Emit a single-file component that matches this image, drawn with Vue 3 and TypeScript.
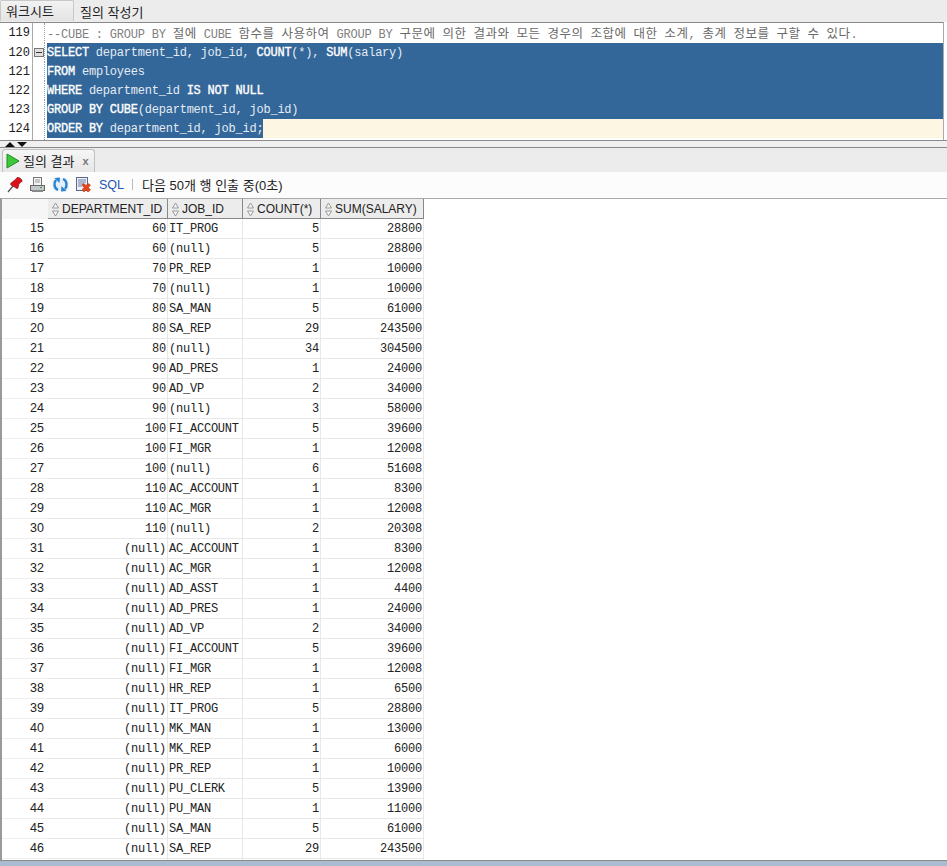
<script setup lang="ts">
interface Seg { t: string; k?: boolean; ko?: boolean }
const comment: Seg[] = [
  { t: '--CUBE : GROUP BY ' }, { t: '절에', ko: true }, { t: ' CUBE ' },
  { t: '함수를', ko: true }, { t: ' ' }, { t: '사용하여', ko: true }, { t: ' GROUP BY ' },
  { t: '구문에', ko: true }, { t: ' ' }, { t: '의한', ko: true }, { t: ' ' },
  { t: '결과와', ko: true }, { t: ' ' }, { t: '모든', ko: true }, { t: ' ' },
  { t: '경우의', ko: true }, { t: ' ' }, { t: '조합에', ko: true }, { t: ' ' },
  { t: '대한', ko: true }, { t: ' ' }, { t: '소계', ko: true }, { t: ', ' },
  { t: '총계', ko: true }, { t: ' ' }, { t: '정보를', ko: true }, { t: ' ' },
  { t: '구할', ko: true }, { t: ' ' }, { t: '수', ko: true }, { t: ' ' },
  { t: '있다', ko: true }, { t: '.' }
]
const sql: { n: number; segs: Seg[]; last?: boolean }[] = [
  { n: 120, segs: [{ t: 'SELECT', k: true }, { t: ' department_id, job_id, ' }, { t: 'COUNT', k: true }, { t: '(*), ' }, { t: 'SUM', k: true }, { t: '(salary)' }] },
  { n: 121, segs: [{ t: 'FROM', k: true }, { t: ' employees' }] },
  { n: 122, segs: [{ t: 'WHERE', k: true }, { t: ' department_id ' }, { t: 'IS NOT NULL', k: true }] },
  { n: 123, segs: [{ t: 'GROUP BY CUBE', k: true }, { t: '(department_id, job_id)' }] },
  { n: 124, segs: [{ t: 'ORDER BY', k: true }, { t: ' department_id, job_id;' }], last: true }
]
const rows: [number, string, string, number, number][] = [
  [15, '60', 'IT_PROG', 5, 28800], [16, '60', '(null)', 5, 28800], [17, '70', 'PR_REP', 1, 10000],
  [18, '70', '(null)', 1, 10000], [19, '80', 'SA_MAN', 5, 61000], [20, '80', 'SA_REP', 29, 243500],
  [21, '80', '(null)', 34, 304500], [22, '90', 'AD_PRES', 1, 24000], [23, '90', 'AD_VP', 2, 34000],
  [24, '90', '(null)', 3, 58000], [25, '100', 'FI_ACCOUNT', 5, 39600], [26, '100', 'FI_MGR', 1, 12008],
  [27, '100', '(null)', 6, 51608], [28, '110', 'AC_ACCOUNT', 1, 8300], [29, '110', 'AC_MGR', 1, 12008],
  [30, '110', '(null)', 2, 20308], [31, '(null)', 'AC_ACCOUNT', 1, 8300], [32, '(null)', 'AC_MGR', 1, 12008],
  [33, '(null)', 'AD_ASST', 1, 4400], [34, '(null)', 'AD_PRES', 1, 24000], [35, '(null)', 'AD_VP', 2, 34000],
  [36, '(null)', 'FI_ACCOUNT', 5, 39600], [37, '(null)', 'FI_MGR', 1, 12008], [38, '(null)', 'HR_REP', 1, 6500],
  [39, '(null)', 'IT_PROG', 5, 28800], [40, '(null)', 'MK_MAN', 1, 13000], [41, '(null)', 'MK_REP', 1, 6000],
  [42, '(null)', 'PR_REP', 1, 10000], [43, '(null)', 'PU_CLERK', 5, 13900], [44, '(null)', 'PU_MAN', 1, 11000],
  [45, '(null)', 'SA_MAN', 5, 61000], [46, '(null)', 'SA_REP', 29, 243500]
]
const cols = ['DEPARTMENT_ID', 'JOB_ID', 'COUNT(*)', 'SUM(SALARY)']
</script>

<template>
  <div class="page">
    <div class="tabs">
      <div class="tab active">워크시트</div>
      <div class="tab">질의 작성기</div>
    </div>
    <div class="editor">
      <div class="line first">
        <div class="num">119</div>
        <div class="fold"></div>
        <div class="code comment">
          <span v-for="(s, i) in comment" :key="i" :class="{ ko: s.ko }">{{ s.t }}</span>
        </div>
      </div>
      <div v-for="l in sql" :key="l.n" class="line">
        <div class="num">{{ l.n }}</div>
        <div class="fold"><span v-if="l.n === 120" class="minus"></span></div>
        <div class="code" :class="{ full: !l.last, cur: l.last }">
          <span class="sel"><span v-for="(s, i) in l.segs" :key="i" :class="{ kw: s.k }">{{ s.t }}</span></span>
        </div>
      </div>
    </div>
    <div class="splitter">
      <span class="up"></span><span class="down"></span>
    </div>
    <div class="rtabs">
      <div class="rtab">
        <svg width="14" height="16" viewBox="0 0 14 16"><path d="M1 1 L13 8 L1 15 Z" fill="#3fc83a" stroke="#1d8a22" stroke-width="1"/></svg>
        <span class="rlabel">질의 결과</span>
        <span class="x">x</span>
      </div>
    </div>
    <div class="toolbar">
      <svg class="ic" width="16" height="17" viewBox="0 0 16 17">
        <path d="M1 16 L6 10" stroke="#555" stroke-width="1.3"/>
        <path d="M4 7 L9 3 L10 1.500 Q12 0.500 15 4 Q15.500 6 14 6 L12 8 L11 12 Q10 13 9 12 L4 9 Q3 8 4 7Z" fill="#d8141a" stroke="#8e0c10" stroke-width="0.6"/>
      </svg>
      <svg class="ic" width="17" height="17" viewBox="0 0 17 17">
        <rect x="4.500" y="1.500" width="8" height="8" fill="#f4f4f4" stroke="#777"/>
        <path d="M6 4h5M6 6h5" stroke="#999"/>
        <rect x="1.500" y="9.500" width="14" height="5" fill="#c4c8cc" stroke="#666"/>
        <rect x="3" y="14" width="11" height="2" fill="#888"/>
        <rect x="11" y="11" width="2" height="1" fill="#3a3"/>
      </svg>
      <svg class="ic" width="17" height="17" viewBox="0 0 17 17">
        <rect x="0.500" y="2.500" width="16" height="12" rx="3" fill="#e4f1fc"/>
        <path d="M6 14 C2 12.500 1.500 7 4 4" fill="none" stroke="#2a82cc" stroke-width="2.400"/>
        <path d="M2.500 2 L8 1.500 L7.500 7 Z" fill="#2a82cc"/>
        <path d="M11 3 C15 4.500 15.500 10 13 13" fill="none" stroke="#2a82cc" stroke-width="2.400"/>
        <path d="M14.500 15 L9 15.500 L9.500 10 Z" fill="#2a82cc"/>
      </svg>
      <svg class="ic" width="17" height="17" viewBox="0 0 17 17">
        <rect x="1.500" y="1.500" width="11" height="13" fill="#eef0f6" stroke="#5a6a90"/>
        <path d="M3 4h8M3 6h8M3 8h6M3 10h4" stroke="#6a7aa0"/>
        <path d="M7 9 L9 7.500 L11 9.500 L13 7.500 L15.500 9 L13.500 11.500 L15.500 14 L13 16 L11 14 L9 16 L7 14 L9 11.500 Z" fill="#e4471c" stroke="#a82a0c" stroke-width="0.5"/>
      </svg>
      <span class="sql">SQL</span>
      <span class="sep"></span>
      <span class="status">다음 50개 행 인출 중(0초)</span>
    </div>
    <div class="grid">
      <div class="ghead">
        <div class="corner"></div>
        <div v-for="(c, i) in cols" :key="c" class="hcell" :class="'c' + i">
          <svg width="9" height="15" viewBox="0 0 9 15"><path d="M4.500 1 L7.500 6 H1.500 Z M4.500 14 L7.500 9 H1.500 Z" fill="#f6f6f6" stroke="#999"/></svg>
          <span>{{ c }}</span>
        </div>
      </div>
      <div v-for="r in rows" :key="r[0]" class="grow">
        <div class="rn">{{ r[0] }}</div>
        <div class="cell c0 right">{{ r[1] }}</div>
        <div class="cell c1">{{ r[2] }}</div>
        <div class="cell c2 right">{{ r[3] }}</div>
        <div class="cell c3 right">{{ r[4] }}</div>
      </div>
      <div class="grow">
        <div class="rn"></div>
        <div class="cell c0"></div>
        <div class="cell c1"></div>
        <div class="cell c2"></div>
        <div class="cell c3"></div>
      </div>
    </div>
    <div class="bottom"></div>
  </div>
</template>

<style>
html, body { margin: 0; overflow: hidden; background: #fff; }
</style>

<style scoped>
.page { width: 947px; height: 866px; display: flex; flex-direction: column; overflow: hidden; font-family: "Liberation Sans", "Noto Sans CJK KR", sans-serif; background: #fff; }
.tabs { height: 22px; flex: none; display: flex; background: #ececec; font-size: 13px; color: #222; }
.tab { padding: 0 5px 0 6px; line-height: 25px; white-space: nowrap; }
.tab.active { box-sizing: border-box; width: 74px; background: linear-gradient(#f2f2f2, #e4e4e4); border: 1px solid #c8c8c8; border-bottom: 0; border-radius: 2px 2px 0 0; height: 21px; line-height: 21px; padding-left: 5px; }
.editor { flex: none; border-top: 1px solid #8a8a8a; height: 117px; display: flex; flex-direction: column; border-right: 1px solid #aaa; margin-right: 3px; }
.line { height: 19px; display: flex; flex: none; }
.line.first { height: 20px; }
.num { width: 30px; padding-right: 2px; text-align: right; font: 12px/20px "Liberation Mono", monospace; color: #222; border-right: 1px solid #aaa; flex: none; }
.line:last-child .num, .line:last-child .fold { height: 21px; }
.fold { width: 10px; padding-left: 1px; flex: none; border-right: 1px dotted #999; display: flex; align-items: center; margin-right: 2px; }
.minus { width: 10px; height: 9px; box-sizing: border-box; border: 1px solid #777; background: linear-gradient(#333, #333) center / 6px 1px no-repeat #e0e0e0; }
.code { flex: 1; font: 12px/20px "Liberation Mono", "Noto Sans CJK KR", monospace; letter-spacing: -0.220px; white-space: pre; color: #777; }
.comment { color: #808080; }
.ko { font-family: "Noto Sans CJK KR", sans-serif; font-size: 12.500px; letter-spacing: 0.500px; color: #6a6a6a; }
.full { background: #336699; }
.cur { background: #fdf6e2; height: 19px; }
.sel { background: #336699; color: #e4ecf4; display: inline-block; height: 19px; }
.kw { color: #fff; -webkit-text-stroke: 0.350px #fff; }
.splitter { height: 6px; flex: none; border-top: 1px solid #8a8a8a; border-bottom: 1px solid #8a8a8a; background: #f0f0f0; display: flex; align-items: flex-end; gap: 2px; padding-left: 5px; }
.up { width: 0; height: 0; border-left: 5px solid transparent; border-right: 5px solid transparent; border-bottom: 5px solid #111; }
.down { width: 0; height: 0; border-left: 5px solid transparent; border-right: 5px solid transparent; border-top: 5px solid #111; }
.rtabs { height: 24px; flex: none; background: #ececec; padding-left: 2px; display: flex; align-items: flex-end; }
.rtab { width: 93px; height: 23px; box-sizing: border-box; border: 1px solid #c0c0c0; border-bottom: 0; border-radius: 3px 3px 0 0; background: linear-gradient(#f6f6f6, #e6e6e6); display: flex; align-items: center; padding: 0 0 1px 3px; font-size: 13px; color: #222; }
.rlabel { margin-left: 3px; }
.x { margin-left: 8px; font-size: 11px; color: #777; font-weight: 700; }
.toolbar { height: 26px; flex: none; box-sizing: border-box; padding: 0 0 1px 7px; background: #fcfcfc; display: flex; align-items: center; }
.ic { flex: none; margin-right: 6px; }
.sql { color: #1f56b4; font-size: 12.500px; margin-left: 1px; }
.sep { width: 1px; height: 11px; background: #bbb; margin: 0 9px 0 8px; }
.status { font-size: 13px; color: #222; }
.grid { flex: 1; min-height: 0; border-left: 2px solid #9a9a9a; border-top: 1px solid #aaa; overflow: hidden; }
.ghead { display: flex; height: 20px; }
.corner { width: 46px; flex: none; background: #f6f6f6; }
.hcell { box-sizing: border-box; display: flex; align-items: center; gap: 2px; padding: 1px 0 0 3px; background: #ececec; border-right: 1px solid #888; border-bottom: 1px solid #888; font-size: 12px; color: #222; white-space: nowrap; flex: none; }
.grow { display: flex; height: 20px; }
.rn { width: 46px; flex: none; box-sizing: border-box; text-align: right; padding-right: 4px; font: 12.500px/19px "Liberation Sans", sans-serif; color: #222; border-bottom: 1px solid #eee; background: #fff; }
.cell { box-sizing: border-box; font: 12px/20px "Liberation Mono", monospace; letter-spacing: -0.220px; color: #222; padding: 0 1px; white-space: pre; border-right: 1px solid #e8e8e8; border-bottom: 1px solid #e8e8e8; flex: none; }
.right { text-align: right; }
.c0 { width: 120px; }
.c1 { width: 75px; }
.c2 { width: 78px; }
.c3 { width: 103px; }
.bottom { height: 5px; flex: none; border-top: 1px solid #8a8a8a; background: #a9bcd2; }
</style>
